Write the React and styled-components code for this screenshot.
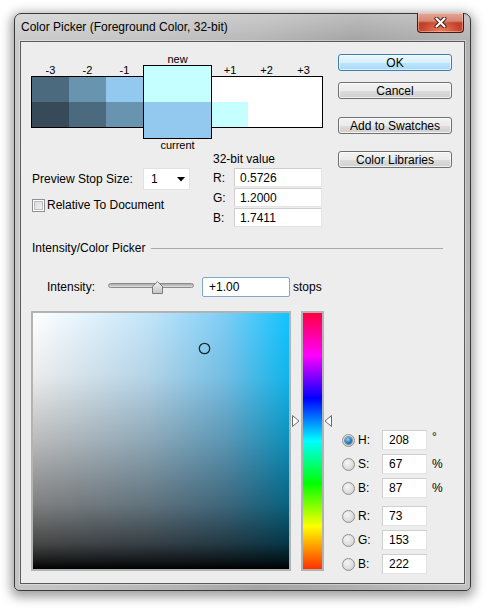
import React from 'react';
import styled, { createGlobalStyle } from 'styled-components';

const GlobalStyle = createGlobalStyle`
  html, body {
    margin: 0;
    padding: 0;
    background: #fff;
  }
  body {
    font-family: "Liberation Sans", Arial, sans-serif;
    font-size: 12px;
    color: #000;
  }
  * {
    box-sizing: border-box;
  }
`;

const Page = styled.div`
  width: 489px;
  height: 610px;
  padding: 13px 0 0 14px;
`;

const Window = styled.div`
  width: 457px;
  height: 578px;
  border: 1px solid #3a3a3a;
  border-radius: 7px 7px 5px 5px;
  padding: 0 5px 6px;
  display: flex;
  flex-direction: column;
  background:
    linear-gradient(to bottom, rgba(255, 255, 255, 0.28) 0px, rgba(255, 255, 255, 0) 27px),
    linear-gradient(100deg, #cacaca 0%, #c3c3c3 25%, #b6b6b6 45%, #a4a4a4 62%, #b0b0b0 78%, #c1c1c1 100%);
  box-shadow: 0 3px 11px 3px rgba(0, 0, 0, 0.38);
`;

const TitleBar = styled.div`
  height: 27px;
  flex: none;
  display: flex;
  align-items: flex-start;
`;

const TitleText = styled.div`
  flex: 1;
  padding-left: 1px;
  line-height: 27px;
  font-size: 12px;
  color: #000;
`;

const CloseButton = styled.div`
  width: 47px;
  height: 20px;
  margin: -1px 1px 0 0;
  border: 1px solid #4a1610;
  border-top: none;
  border-radius: 0 0 4px 4px;
  display: flex;
  align-items: center;
  justify-content: center;
  background:
    radial-gradient(ellipse at 50% 100%, rgba(255, 150, 110, 0.7) 0%, rgba(255, 120, 90, 0) 60%),
    linear-gradient(to bottom, #e4a897 0%, #d68672 42%, #bf3f27 52%, #c8472d 100%);
  box-shadow: inset 0 0 0 1px rgba(255, 220, 210, 0.45);
`;

const Client = styled.div`
  flex: 1;
  border: 1px solid #5a5a5a;
  background: #ededed;
  display: flex;
  flex-direction: column;
  box-shadow: 0 0 0 1px rgba(255, 255, 255, 0.35);
`;

const TopArea = styled.div`
  display: flex;
`;

const LeftTop = styled.div`
  padding: 11px 0 0 10px;
  display: flex;
  flex-direction: column;
`;

const SwatchRow = styled.div`
  display: flex;
  align-items: flex-start;
`;

const SideGroup = styled.div`
  margin-top: 11px;
  display: flex;
  flex-direction: column;
`;

const LabelRow = styled.div`
  display: flex;
  height: 12px;
  padding-left: ${(p) => p.$pad || 0}px;
`;

const SwatchLabel = styled.div`
  width: ${(p) => p.$w}px;
  text-align: center;
  font-size: 11px;
  line-height: 12px;
`;

const Strip = styled.div`
  height: 52px;
  border: 1px solid #000;
  ${(p) => (p.$side === 'left' ? 'border-right: none;' : 'border-left: none;')}
  display: grid;
  grid-template-columns: ${(p) => p.$cols};
  grid-template-rows: 25px 25px;
`;

const Cell = styled.div`
  background: ${(p) => p.$c};
`;

const CenterGroup = styled.div`
  width: 69px;
  display: flex;
  flex-direction: column;
`;

const CenterLabel = styled.div`
  height: 12px;
  line-height: 12px;
  font-size: 11px;
  text-align: center;
`;

const CenterBox = styled.div`
  height: 74px;
  border: 1px solid #000;
  display: flex;
  flex-direction: column;
`;

const Half = styled.div`
  flex: 1;
  background: ${(p) => p.$c};
`;

const ValuesRow = styled.div`
  display: flex;
  margin-top: 1px;
`;

const LeftControls = styled.div`
  width: 182px;
  padding: 16px 0 0 1px;
  display: flex;
  flex-direction: column;
`;

const PreviewRow = styled.div`
  display: flex;
  align-items: center;
`;

const ControlLabel = styled.div`
  width: ${(p) => p.$w}px;
  flex: none;
  padding-left: ${(p) => p.$pad || 0}px;
  white-space: nowrap;
`;

const Dropdown = styled.div`
  width: 47px;
  height: 22px;
  background: #fff;
  border: 1px solid #e2e2e2;
  display: flex;
  align-items: center;
  justify-content: space-between;
  padding: 0 4px 0 7px;
`;

const CheckRow = styled.div`
  margin-top: 8px;
  display: flex;
  align-items: center;
`;

const CheckBox = styled.div`
  width: 13px;
  height: 13px;
  border: 1px solid #8e8f8f;
  background: linear-gradient(135deg, #cfd2d6 0%, #e9eaeb 60%, #f7f7f7 100%);
  box-shadow: inset 0 0 0 1px #fff, inset 0 0 0 2px #b9bcc0;
`;

const CheckText = styled.span`
  margin-left: 2px;
`;

const BitValues = styled.div`
  display: flex;
  flex-direction: column;
`;

const BitTitle = styled.div`
  height: 14px;
  line-height: 14px;
  margin-bottom: 2px;
`;

const BitRow = styled.div`
  display: flex;
  align-items: center;
  margin-bottom: 1px;
`;

const Field = styled.input`
  width: ${(p) => p.$w}px;
  height: ${(p) => p.$h || 19}px;
  padding: 0 0 0 ${(p) => p.$pad || 5}px;
  margin: 0;
  border: 1px solid;
  border-color: ${(p) => (p.$focus ? '#7ea6cf' : '#cfcfcf #e4e4e4 #e4e4e4 #cfcfcf')};
  border-radius: ${(p) => (p.$focus ? '2px' : '0')};
  background: #fff;
  font-family: "Liberation Sans", Arial, sans-serif;
  font-size: 12px;
  color: #000;
  outline: none;
`;

const ButtonCol = styled.div`
  width: 114px;
  margin: 12px 12px 0 auto;
  display: flex;
  flex-direction: column;
`;

const Button = styled.div`
  height: 17px;
  margin-top: ${(p) => p.$mt || 0}px;
  border: 1px solid ${(p) => (p.$primary ? '#3c7fb1' : '#707070')};
  border-radius: 3px;
  display: flex;
  align-items: center;
  justify-content: center;
  font-size: 12px;
  background: ${(p) =>
    p.$primary
      ? 'linear-gradient(to bottom, #eaf6fd 0%, #d9f0fc 50%, #bee6fd 51%, #a7d9f5 100%)'
      : 'linear-gradient(to bottom, #f2f2f2 0%, #ebebeb 50%, #dddddd 51%, #cfcfcf 100%)'};
  box-shadow: inset 0 0 0 1px ${(p) => (p.$primary ? 'rgba(255,255,255,0.6)' : 'rgba(255,255,255,0.7)')};
`;

const Separator = styled.div`
  margin-top: 13px;
  padding: 0 21px 0 11px;
  height: 14px;
  display: flex;
  align-items: center;
`;

const SepLine = styled.div`
  flex: 1;
  margin-left: 6px;
  height: 1px;
  background: #a8a8a8;
`;

const IntensityRow = styled.div`
  margin-top: 22px;
  height: 20px;
  padding-left: 26px;
  display: flex;
  align-items: center;
`;

const SliderWrap = styled.div`
  position: relative;
  width: 86px;
  height: 20px;
  margin-right: 8px;
`;

const SliderTrack = styled.div`
  position: absolute;
  left: 0;
  right: 0;
  top: 6px;
  height: 5px;
  border: 1px solid #8c8c8c;
  border-radius: 3px;
  background: linear-gradient(to bottom, #a6a6a6, #e2e2e2);
`;

const SliderThumb = styled.svg`
  position: absolute;
  top: 4px;
  left: 44px;
`;

const Units = styled.span`
  margin-left: ${(p) => p.$ml || 3}px;
  align-self: ${(p) => (p.$top ? 'flex-start' : 'center')};
  line-height: ${(p) => (p.$top ? '14px' : 'normal')};
`;

const BottomArea = styled.div`
  margin-top: 14px;
  padding-left: 10px;
  display: flex;
  align-items: flex-start;
`;

const ColorField = styled.div`
  position: relative;
  width: 260px;
  height: 260px;
  border: 2px solid #b3b3b3;
  background:
    linear-gradient(
      to bottom,
      rgba(0, 0, 0, 0) 0%,
      rgba(0, 0, 0, 0.08) 25%,
      rgba(0, 0, 0, 0.27) 50%,
      rgba(0, 0, 0, 0.5) 75%,
      rgba(0, 0, 0, 0.72) 90%,
      rgba(0, 0, 0, 0.9) 97%,
      rgba(0, 0, 0, 1) 100%
    ),
    linear-gradient(to right, #ffffff 0%, #c2e5fa 45%, #7dcdf6 75%, #10c4ff 100%);
`;

const Marker = styled.svg`
  position: absolute;
  left: 165px;
  top: 29px;
`;

const HueWrap = styled.div`
  position: relative;
  margin-left: 10px;
  width: 23px;
  height: 260px;
`;

const HueBar = styled.div`
  width: 23px;
  height: 260px;
  border: 2px solid #b3b3b3;
  background: linear-gradient(
    to bottom,
    #ff0040 0%,
    #ff00ff 16.67%,
    #0000ff 33.33%,
    #00ffff 50%,
    #00ff00 66.67%,
    #ffff00 83.33%,
    #ff3000 100%
  );
`;

const Pointer = styled.svg`
  position: absolute;
  top: 104px;
  ${(p) => (p.$side === 'left' ? 'left: -9px;' : 'right: -8px;')}
`;

const HsbCol = styled.div`
  margin: 119px 0 0 18px;
  display: flex;
  flex-direction: column;
`;

const HsbRow = styled.div`
  height: 20px;
  margin-top: ${(p) => p.$mt || 0}px;
  display: flex;
  align-items: center;
`;

const Radio = styled.div`
  width: 13px;
  height: 13px;
  flex: none;
  border-radius: 50%;
  border: 1px solid #8e8f8f;
  display: flex;
  align-items: center;
  justify-content: center;
  background: radial-gradient(circle at 40% 35%, #f6f6f6 0%, #dedede 55%, #c9c9c9 100%);
`;

const RadioDot = styled.div`
  width: 7px;
  height: 7px;
  border-radius: 50%;
  background: radial-gradient(circle at 40% 35%, #8fd2f5 0%, #2a82c2 50%, #0c3e6a 100%);
  box-shadow: 0 0 0 1px rgba(20, 60, 100, 0.5);
`;

const swLeft = [
  ['#4b6a7e', '#6894b0', '#93c9ef'],
  ['#364a59', '#4b6a7e', '#6894b0'],
];
const swRight = [
  ['#ffffff', '#ffffff', '#ffffff'],
  ['#c6ffff', '#ffffff', '#ffffff'],
];

const hsb = [
  { k: 'H', v: '208', u: '°', on: true },
  { k: 'S', v: '67', u: '%' },
  { k: 'B', v: '87', u: '%' },
  { k: 'R', v: '73', gap: true },
  { k: 'G', v: '153' },
  { k: 'B', v: '222' },
];

const ColorPicker = () => {
  return (
    <Page>
      <GlobalStyle />
      <Window>
        <TitleBar>
          <TitleText>Color Picker (Foreground Color, 32-bit)</TitleText>
          <CloseButton>
            <svg width="13" height="11" viewBox="0 0 13 11">
              <path d="M2.5 1.5 L10.5 9.5 M10.5 1.5 L2.5 9.5" stroke="#3b1a14" strokeWidth="4" strokeLinecap="round" />
              <path d="M2.5 1.5 L10.5 9.5 M10.5 1.5 L2.5 9.5" stroke="#fff" strokeWidth="2.2" strokeLinecap="round" />
            </svg>
          </CloseButton>
        </TitleBar>
        <Client>
          <TopArea>
            <LeftTop>
              <SwatchRow>
                <SideGroup>
                  <LabelRow $pad={1}>
                    <SwatchLabel $w={37}>-3</SwatchLabel>
                    <SwatchLabel $w={37}>-2</SwatchLabel>
                    <SwatchLabel $w={37}>-1</SwatchLabel>
                  </LabelRow>
                  <Strip $side="left" $cols="37px 37px 37px" style={{ width: 112 }}>
                    {swLeft.flat().map((c, i) => (
                      <Cell key={i} $c={c} />
                    ))}
                  </Strip>
                </SideGroup>
                <CenterGroup>
                  <CenterLabel>new</CenterLabel>
                  <CenterBox>
                    <Half $c="#c6ffff" />
                    <Half $c="#93c9ef" />
                  </CenterBox>
                  <CenterLabel>current</CenterLabel>
                </CenterGroup>
                <SideGroup>
                  <LabelRow>
                    <SwatchLabel $w={36}>+1</SwatchLabel>
                    <SwatchLabel $w={37}>+2</SwatchLabel>
                    <SwatchLabel $w={37}>+3</SwatchLabel>
                  </LabelRow>
                  <Strip $side="right" $cols="36px 37px 37px" style={{ width: 111 }}>
                    {swRight.flat().map((c, i) => (
                      <Cell key={i} $c={c} />
                    ))}
                  </Strip>
                </SideGroup>
              </SwatchRow>
              <ValuesRow>
                <LeftControls>
                  <PreviewRow>
                    <ControlLabel $w={111}>Preview Stop Size:</ControlLabel>
                    <Dropdown>
                      <span>1</span>
                      <svg width="8" height="5" viewBox="0 0 8 5">
                        <path d="M0 0 H8 L4 4.5 Z" fill="#000" />
                      </svg>
                    </Dropdown>
                  </PreviewRow>
                  <CheckRow>
                    <CheckBox />
                    <CheckText>Relative To Document</CheckText>
                  </CheckRow>
                </LeftControls>
                <BitValues>
                  <BitTitle>32-bit value</BitTitle>
                  <BitRow>
                    <ControlLabel $w={21}>R:</ControlLabel>
                    <Field $w={88} readOnly value="0.5726" />
                  </BitRow>
                  <BitRow>
                    <ControlLabel $w={21}>G:</ControlLabel>
                    <Field $w={88} readOnly value="1.2000" />
                  </BitRow>
                  <BitRow>
                    <ControlLabel $w={21}>B:</ControlLabel>
                    <Field $w={88} readOnly value="1.7411" />
                  </BitRow>
                </BitValues>
              </ValuesRow>
            </LeftTop>
            <ButtonCol>
              <Button $primary>OK</Button>
              <Button $mt={11}>Cancel</Button>
              <Button $mt={18}>Add to Swatches</Button>
              <Button $mt={17}>Color Libraries</Button>
            </ButtonCol>
          </TopArea>

          <Separator>
            <span>Intensity/Color Picker</span>
            <SepLine />
          </Separator>

          <IntensityRow>
            <ControlLabel $w={61}>Intensity:</ControlLabel>
            <SliderWrap>
              <SliderTrack />
              <SliderThumb width="11" height="13" viewBox="0 0 11 13">
                <defs>
                  <linearGradient id="thumbG" x1="0" y1="0" x2="0" y2="1">
                    <stop offset="0" stopColor="#f4f4f4" />
                    <stop offset="1" stopColor="#c4c4c4" />
                  </linearGradient>
                </defs>
                <path d="M5.5 0.5 L10.5 5.5 V12.5 H0.5 V5.5 Z" fill="url(#thumbG)" stroke="#7a7a7a" />
              </SliderThumb>
            </SliderWrap>
            <Field $w={88} $h={20} $pad={6} $focus readOnly value="+1.00" />
            <Units>stops</Units>
          </IntensityRow>

          <BottomArea>
            <ColorField>
              <Marker width="13" height="13" viewBox="0 0 13 13">
                <circle cx="6.5" cy="6.5" r="5.2" fill="none" stroke="#1b2833" strokeWidth="1.3" />
              </Marker>
            </ColorField>
            <HueWrap>
              <HueBar />
              <Pointer $side="left" width="8" height="12" viewBox="0 0 8 12">
                <path d="M0.5 0.5 L7 6 L0.5 11.5 Z" fill="#fff" stroke="#6a6a6a" />
              </Pointer>
              <Pointer $side="right" width="8" height="12" viewBox="0 0 8 12">
                <path d="M7.5 0.5 L1 6 L7.5 11.5 Z" fill="#fff" stroke="#6a6a6a" />
              </Pointer>
            </HueWrap>
            <HsbCol>
              {hsb.map((r, i) => (
                <HsbRow key={i} $mt={i === 0 ? 0 : r.gap ? 8 : 4}>
                  <Radio>{r.on && <RadioDot />}</Radio>
                  <ControlLabel $w={27} $pad={3}>
                    {r.k}:
                  </ControlLabel>
                  <Field $w={45} $h={20} $pad={6} readOnly value={r.v} />
                  {r.u && (
                    <Units $ml={5} $top={r.u === '°'}>
                      {r.u}
                    </Units>
                  )}
                </HsbRow>
              ))}
            </HsbCol>
          </BottomArea>
        </Client>
      </Window>
    </Page>
  );
};

export default function App() {
  return <ColorPicker />;
}
